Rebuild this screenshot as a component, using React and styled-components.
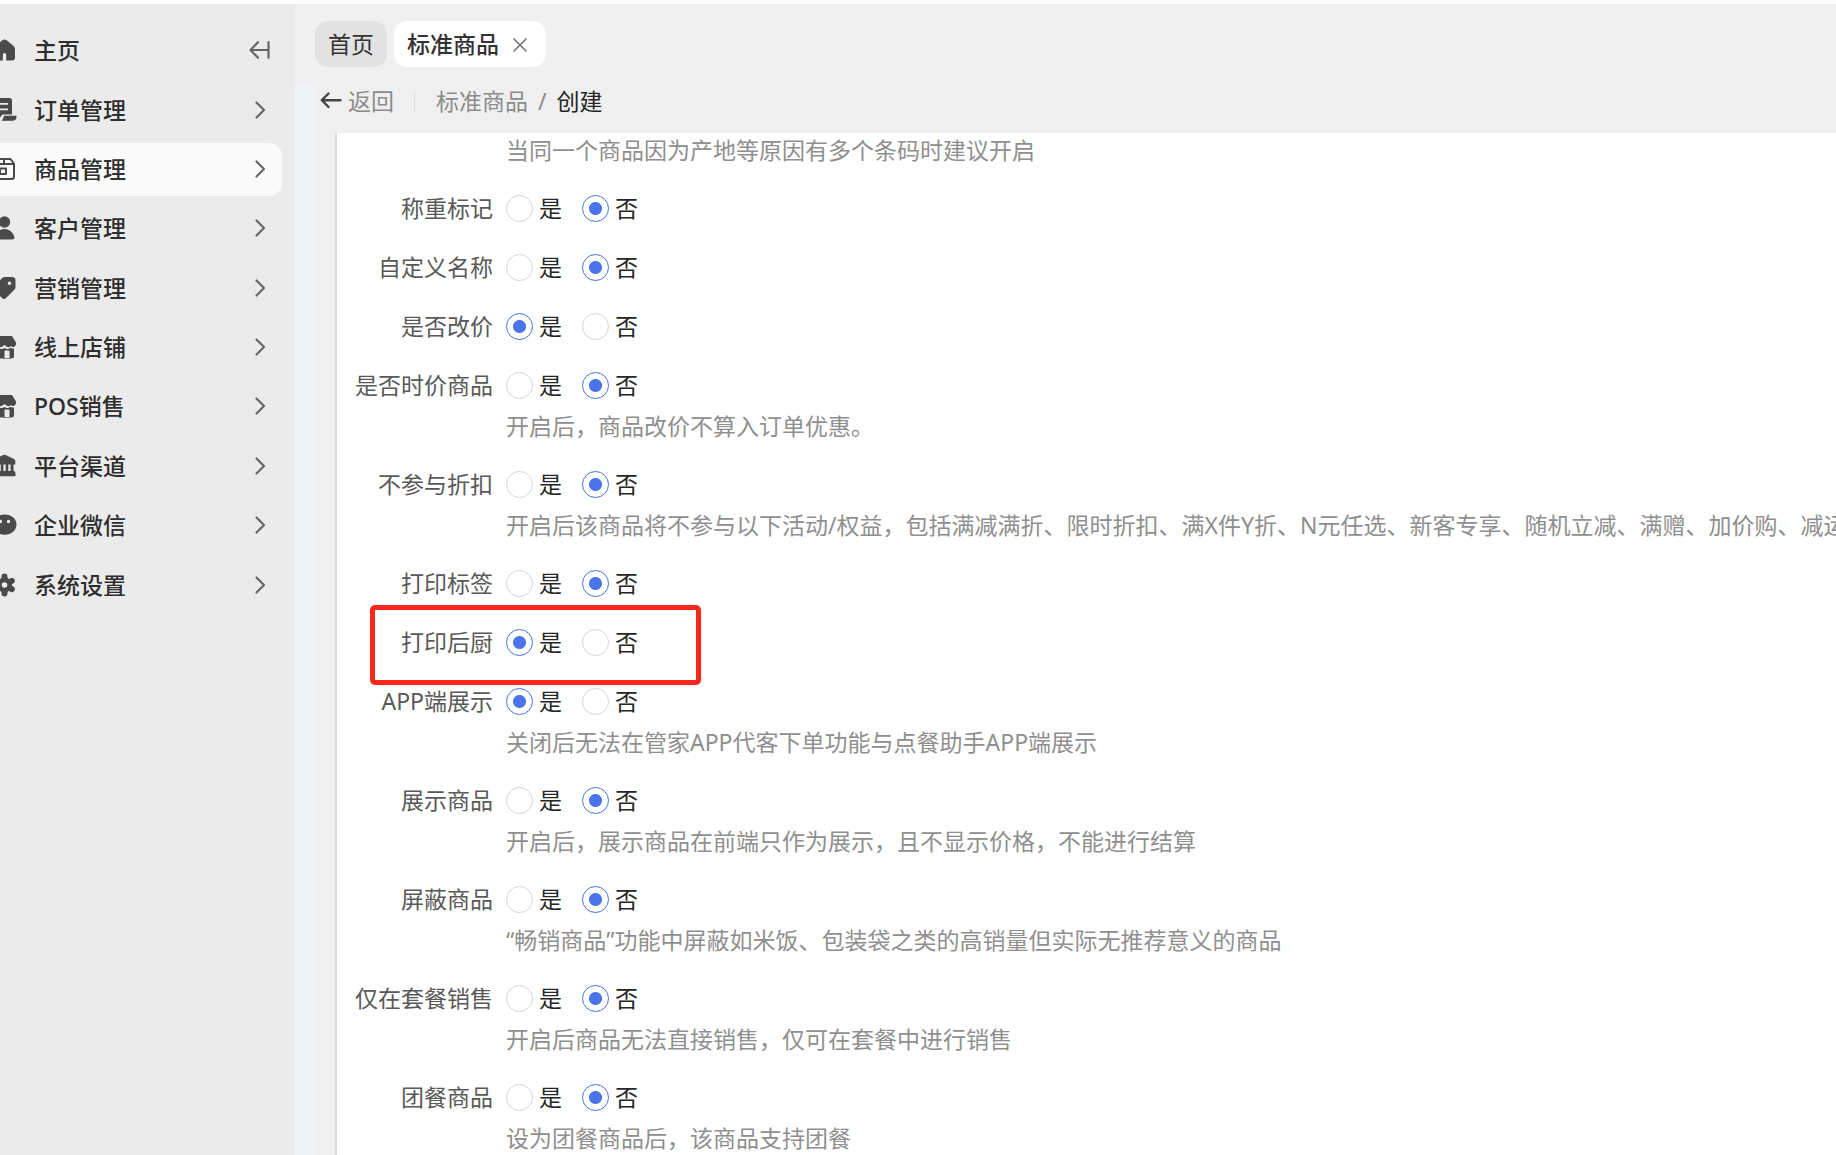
import React, { useState } from "react";
import styled, { createGlobalStyle } from "styled-components";

const GlobalStyle = createGlobalStyle`
  *, *::before, *::after { box-sizing: border-box; }
  body {
    margin: 0;
    background: #fdfdfd;
    color: #262626;
    font-family: "Noto Sans", "Noto Sans CJK SC", sans-serif;
    font-size: 23px;
    line-height: 36px;
  }
  button, input { font: inherit; color: inherit; margin: 0; }
  button { border: 0; padding: 0; background: none; cursor: pointer; }
  a { color: inherit; text-decoration: none; }
`;

const Page = styled.div`
  display: flex;
  height: 100vh;
  padding-top: 4px;
  overflow: hidden;
`;

const Sidebar = styled.aside`
  flex: 0 0 295px;
  padding: 20px 13px 0 0;
  background: #ebebeb;
  overflow: hidden;
`;

const SidebarHead = styled.div`
  display: flex;
  align-items: center;
  padding-right: 12px;
`;

const Menu = styled.nav`
  display: flex;
  flex-direction: column;
  justify-content: space-between;
  height: 528px;
  margin-top: 7px;
`;

const MenuItem = styled.a`
  display: flex;
  flex: 0 0 53px;
  align-items: center;
  gap: 18px;
  height: 53px;
  margin-left: -20px;
  padding: 0 16px 2px 12px;
  border-radius: 13px;
  background: ${(p) => (p.$active ? "#fafafa" : "transparent")};
  color: #2e2e2e;
  font-weight: 500;

  & > span { flex: 1; }
`;

const HomeItem = styled(MenuItem)`
  flex: 1;
`;

const Glyph = styled.svg`
  flex: none;
  display: block;
  width: ${(p) => p.$w || 24}px;
  height: ${(p) => p.$h || 24}px;
  color: ${(p) => p.$color || "#4a4a4a"};
  fill: none;
  stroke: none;
`;

const CollapseButton = styled.button`
  padding-bottom: 2px;
`;

const Workspace = styled.div`
  display: flex;
  flex: 1;
  min-width: 0;
  flex-direction: column;
  background: #f0f0f0;
`;

const Tabs = styled.div`
  display: flex;
  gap: 7px;
  padding: 17px 20px 16px;
`;

const Tab = styled.div`
  display: flex;
  align-items: center;
  gap: 13px;
  height: 46px;
  padding: 0 ${(p) => (p.$active ? 18 : 13)}px 0 13px;
  border-radius: 13px;
  background: ${(p) => (p.$active ? "#fff" : "#e2e2e2")};
  color: #333;
  font-weight: ${(p) => (p.$active ? 500 : 400)};
`;

const CloseButton = styled.button`
  padding-top: 2px;
`;

const Body = styled.div`
  display: flex;
  flex: 1;
  min-height: 0;
`;

const Gutter = styled.div`
  flex: 0 0 20px;
  background: #f0f2f5;
`;

const Content = styled.main`
  display: flex;
  flex: 1;
  min-width: 0;
  flex-direction: column;
`;

const Breadcrumb = styled.div`
  display: flex;
  align-items: center;
  height: 36px;
  margin-bottom: 14px;
  padding-left: 5px;
  color: #8c8c8c;

  strong { color: #262626; font-weight: 400; }
`;

const BackButton = styled.button`
  display: flex;
  align-items: center;
  gap: 6px;
`;

const Divider = styled.span`
  width: 1px;
  height: 20px;
  margin: 0 21px 0 20px;
  background: #e0e0e0;
`;

const Slash = styled.span`
  margin: 0 10px;
`;

const Panel = styled.form`
  flex: 1;
  min-height: 0;
  margin-left: 20px;
  border-left: 2px solid #dcdcdc;
  background: #fff;
  overflow: hidden;
`;

const Field = styled.fieldset`
  position: relative;
  display: grid;
  grid-template-columns: 156px minmax(0, 1fr);
  column-gap: 13px;
  min-width: 0;
  margin: 0 0 12px;
  padding: 0;
  border: 0;
`;

const FieldLabel = styled.span`
  color: #595959;
  line-height: 47px;
  text-align: right;
  white-space: nowrap;
`;

const Options = styled.div`
  display: flex;
  align-items: center;
  gap: 20px;
  height: 47px;
`;

const Option = styled.label`
  display: flex;
  align-items: center;
  gap: 6px;
  cursor: pointer;

  span { padding-bottom: 2px; }
`;

const Radio = styled.input`
  appearance: none;
  width: 27px;
  height: 27px;
  border: 1px solid #d4d4d4;
  border-radius: 50%;
  background: #fff;

  &:checked {
    border-color: #4673dc;
    background: radial-gradient(circle, #4a74e8 6px, #fff 7px);
  }
`;

const Hint = styled.p`
  grid-column: 2;
  margin: 0;
  padding-bottom: 6px;
  color: #8f8f8f;
  line-height: 34px;
  white-space: nowrap;
`;

const Highlight = styled.div`
  position: absolute;
  top: -14px;
  left: 33px;
  width: 331px;
  height: 80px;
  border: 5px solid #f9261b;
  border-radius: 5px;
  pointer-events: none;
`;

const storeIcon = (
  <>
    <path
      fill="currentColor"
      d="M5 1h15l4 6.500v1.800a3 3 0 0 1-5.200 1.700 3.200 3.200 0 0 1-4.200 0.600L12.500 10l-2.100 1.600a3.200 3.200 0 0 1-4.200-.6A3 3 0 0 1 1 9.300V7.500z"
    />
    <path
      fill="currentColor"
      d="M3 13.500a5 5 0 0 0 3.500-.8 5 5 0 0 0 6 .3 5 5 0 0 0 6-.3 5 5 0 0 0 3.500.8v7.500q0 2.500-2.500 2.500h-2V16.500q0-1-1-1h-3q-1 0-1 1v7H5.500Q3 23.500 3 21z"
    />
    <path fill="currentColor" d="M11 23h7v.6h-7z" />
  </>
);

const icons = {
  home: (
    <path
      fill="currentColor"
      d="M10.300 2.300q2.200-1.800 4.400 0l6.800 5.600Q23 9.200 23 11.200v8.300q0 3-3 3h-5.800v-5.700a1.700 1.700 0 0 0-3.400 0v5.700H5q-3 0-3-3v-8.300q0-2 1.500-3.300z"
    />
  ),
  order: (
    <>
      <path
        fill="currentColor"
        fillRule="evenodd"
        d="M3 0h14.500Q20 0 20 2.500V16.500H10.500L8 19.500V22.500H3Q0 22.500 0 19.500V3Q0 0 3 0zM5 5v1.700h11V5zM5 10.500v1.700h11v-1.700z"
      />
      <path fill="currentColor" d="M12 17.800h12.500q.3 4.900-3.500 4.900H9.500q1.800-1.500 2.500-4.900z" />
    </>
  ),
  goods: (
    <g stroke="currentColor" strokeWidth="2" strokeLinejoin="round">
      <path d="M5.500 2h13L22 6.500V19.500Q22 22 19.500 22H4.500Q2 22 2 19.500V6.500zM2.500 7h19M12 2v4" />
      <path d="M8 11.500h6v5.500H8z" />
    </g>
  ),
  user: (
    <g fill="currentColor">
      <circle cx="12.500" cy="6" r="5.700" />
      <path d="M12.500 13q7 0 9.900 7.500Q23 23.500 20 23.500H5q-3 0-2.400-3Q5.500 13 12.500 13z" />
    </g>
  ),
  tag: (
    <path
      fill="currentColor"
      fillRule="evenodd"
      d="M12.500 1h7.500q3.500 0 3.500 3.500V11q0 1.500-1 2.500l-8.500 8.500q-2 2-4 0L2 14q-2-2 0-4l8.200-8q1-1 2.300-1zM17.500 5.500a1.800 1.800 0 1 0 0 3.600 1.800 1.800 0 0 0 0-3.600z"
    />
  ),
  store: storeIcon,
  bank: (
    <path
      fill="currentColor"
      fillRule="evenodd"
      d="M11.300 1q1.200-.6 2.400 0l8.300 4q1.300.7 1.300 2v3.500H21.500v6.500q2 0 2 2v2.500q0 .8-.8.800H2.300q-.8 0-.8-.8V19q0-2 2-2v-6.500H1.700V7q0-1.300 1.300-2zM6.500 10.500V17h2.300v-6.500zM11.400 10.500V17h2.300v-6.500zM16.300 10.500V17h2.300v-6.500z"
    />
  ),
  wechat: (
    <path
      fill="currentColor"
      fillRule="evenodd"
      d="M12.500 1.500c7 0 12 4.300 12 10s-5 10.300-12 10.300-12-4.600-12-10.300 5-10 12-10zM8.500 6.800a1.700 1.700 0 1 0 0 3.400 1.700 1.700 0 0 0 0-3.400zM16.500 6.800a1.700 1.700 0 1 0 0 3.400 1.700 1.700 0 0 0 0-3.400z"
    />
  ),
  gear: (
    <>
      <g stroke="currentColor" strokeWidth="6" strokeLinecap="round">
        <path d="M12.500 3.500v17M5.200 7.800l14.600 8.400M5.200 16.200l14.600-8.400" />
      </g>
      <circle cx="12.500" cy="12" r="7.500" fill="currentColor" />
      <circle cx="12.500" cy="12" r="2.800" fill="#ebebeb" />
    </>
  ),
};

const menu = [
  ["订单管理", "order"],
  ["商品管理", "goods"],
  ["客户管理", "user"],
  ["营销管理", "tag"],
  ["线上店铺", "store"],
  ["POS销售", "store"],
  ["平台渠道", "bank"],
  ["企业微信", "wechat"],
  ["系统设置", "gear"],
];

const fields = [
  { label: "称重标记", value: "否" },
  { label: "自定义名称", value: "否" },
  { label: "是否改价", value: "是" },
  { label: "是否时价商品", value: "否", hint: "开启后，商品改价不算入订单优惠。" },
  {
    label: "不参与折扣",
    value: "否",
    hint: "开启后该商品将不参与以下活动/权益，包括满减满折、限时折扣、满X件Y折、N元任选、新客专享、随机立减、满赠、加价购、减运费",
  },
  { label: "打印标签", value: "否" },
  { label: "打印后厨", value: "是", highlight: true },
  { label: "APP端展示", value: "是", hint: "关闭后无法在管家APP代客下单功能与点餐助手APP端展示" },
  { label: "展示商品", value: "否", hint: "开启后，展示商品在前端只作为展示，且不显示价格，不能进行结算" },
  { label: "屏蔽商品", value: "否", hint: "“畅销商品”功能中屏蔽如米饭、包装袋之类的高销量但实际无推荐意义的商品" },
  { label: "仅在套餐销售", value: "否", hint: "开启后商品无法直接销售，仅可在套餐中进行销售" },
  { label: "团餐商品", value: "否", hint: "设为团餐商品后，该商品支持团餐" },
];

function Icon({ name }) {
  return (
    <Glyph viewBox="0 0 24 24" overflow="visible" aria-hidden="true">
      {icons[name]}
    </Glyph>
  );
}

function Chevron() {
  return (
    <Glyph $w={12} $h={20} $color="#666" viewBox="0 0 12 20" aria-hidden="true">
      <path d="M2.500 2.500l7.500 7.500L2.500 17.500" stroke="currentColor" strokeWidth="2.200" strokeLinecap="round" strokeLinejoin="round" />
    </Glyph>
  );
}

function RadioField({ label, value, hint, highlight }) {
  const [current, setCurrent] = useState(value);
  return (
    <Field aria-label={label}>
      <FieldLabel>{label}</FieldLabel>
      <Options>
        {["是", "否"].map((choice) => (
          <Option key={choice}>
            <Radio
              type="radio"
              name={label}
              value={choice}
              checked={current === choice}
              onChange={() => setCurrent(choice)}
            />
            <span>{choice}</span>
          </Option>
        ))}
      </Options>
      {hint && <Hint>{hint}</Hint>}
      {highlight && <Highlight />}
    </Field>
  );
}

export default function App() {
  return (
    <>
      <GlobalStyle />
      <Page>
        <Sidebar>
          <SidebarHead>
            <HomeItem href="#home">
              <Icon name="home" />
              <span>主页</span>
            </HomeItem>
            <CollapseButton type="button" aria-label="收起菜单">
              <Glyph $w={21} $h={18} $color="#666" viewBox="0 0 21 18">
                <path
                  d="M9 1.200L1.500 9L9 16.800M2 9h17.500M19.500 1.200v15.600"
                  stroke="currentColor"
                  strokeWidth="2.200"
                  strokeLinecap="round"
                  strokeLinejoin="round"
                />
              </Glyph>
            </CollapseButton>
          </SidebarHead>
          <Menu>
            {menu.map(([text, icon]) => (
              <MenuItem key={text} href={"#" + text} $active={icon === "goods"}>
                <Icon name={icon} />
                <span>{text}</span>
                <Chevron />
              </MenuItem>
            ))}
          </Menu>
        </Sidebar>
        <Workspace>
          <Tabs>
            <Tab>
              <a href="#home">首页</a>
            </Tab>
            <Tab $active>
              <a href="#goods">标准商品</a>
              <CloseButton type="button" aria-label="关闭">
                <Glyph $w={16} $h={16} $color="#777" viewBox="0 0 16 16">
                  <path d="M2 2l12 12M14 2L2 14" stroke="currentColor" strokeWidth="1.700" strokeLinecap="round" />
                </Glyph>
              </CloseButton>
            </Tab>
          </Tabs>
          <Body>
            <Gutter />
            <Content>
              <Breadcrumb>
                <BackButton type="button">
                  <Glyph $w={22} $h={18} $color="#444" viewBox="0 0 22 18">
                    <path
                      d="M8.500 1.500L1.800 8.200L8.500 15M2 8.200h18.500"
                      stroke="currentColor"
                      strokeWidth="2.400"
                      strokeLinecap="round"
                      strokeLinejoin="round"
                    />
                  </Glyph>
                  返回
                </BackButton>
                <Divider />
                <a href="#goods">标准商品</a>
                <Slash>/</Slash>
                <strong>创建</strong>
              </Breadcrumb>
              <Panel>
                <Field>
                  <Hint>当同一个商品因为产地等原因有多个条码时建议开启</Hint>
                </Field>
                {fields.map((field) => (
                  <RadioField key={field.label} {...field} />
                ))}
              </Panel>
            </Content>
          </Body>
        </Workspace>
      </Page>
    </>
  );
}
